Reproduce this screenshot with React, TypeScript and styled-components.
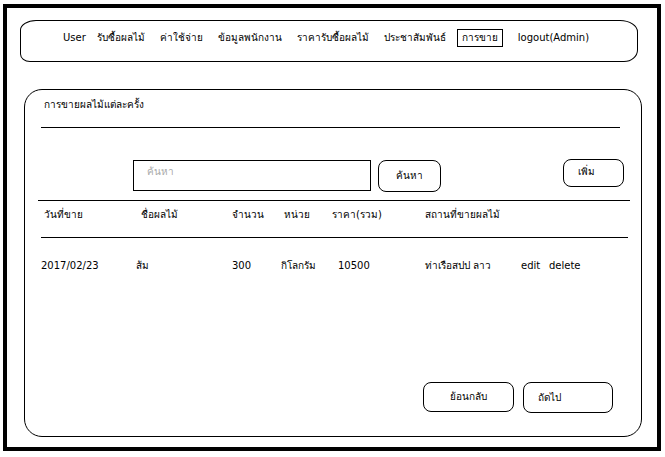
import React from "react";
import styled, { createGlobalStyle } from "styled-components";

const Global = createGlobalStyle`
  html, body { margin: 0; padding: 0; background: #fff; }
  body {
    font-family: "DejaVu Sans", "Liberation Sans", sans-serif;
    font-size: 10px;
    line-height: 14px;
    color: #000;
  }
`;

const Frame = styled.div`
  box-sizing: border-box;
  width: 658px;
  height: 447px;
  margin: 4px 0 0 3px;
  border: 4px solid #000;
  padding: 12px 0 0 13px;
  display: flex;
  flex-direction: column;
`;

const Nav = styled.nav`
  box-sizing: border-box;
  width: 618px;
  height: 42px;
  border: 1px solid #000;
  border-radius: 16px 18px 14px 10px / 10px 12px 12px 8px;
  display: flex;
  align-items: flex-start;
  gap: 15px;
  padding: 10px 0 0 42px;
`;

const NavItem = styled.span<{ $active?: boolean; $tight?: boolean }>`
  white-space: nowrap;
  ${(p) => (p.$tight ? `margin-right: -4px;` : ``)}
  ${(p) =>
    p.$active
      ? `border: 1px solid #000; padding: 1px 4px; margin: -2px 0 0 -4px;`
      : ``}
`;

const Panel = styled.section`
  box-sizing: border-box;
  width: 618px;
  height: 348px;
  margin: 27px 0 0 4px;
  border: 1px solid #000;
  border-radius: 18px;
  display: flex;
  flex-direction: column;
`;

const Title = styled.div`
  margin: 8px 0 0 19px;
`;

const Rule = styled.div<{ $top: number; $left: number; $width: number }>`
  height: 1px;
  background: #000;
  margin-top: ${(p) => p.$top}px;
  margin-left: ${(p) => p.$left}px;
  width: ${(p) => p.$width}px;
`;

const SearchRow = styled.div`
  display: flex;
  align-items: flex-start;
  margin: 32px 17px 0 108px;
`;

const SearchInput = styled.div`
  box-sizing: border-box;
  width: 238px;
  height: 31px;
  border: 1px solid #000;
  padding: 4px 0 0 13px;
  color: #a8a8a8;
`;

const Button = styled.button<{ $w: number; $h: number; $align?: string }>`
  box-sizing: border-box;
  width: ${(p) => p.$w}px;
  height: ${(p) => p.$h}px;
  border: 1px solid #000;
  border-radius: 8px;
  background: #fff;
  font: inherit;
  color: #000;
  padding: 0 14px;
  display: flex;
  align-items: center;
  justify-content: ${(p) => p.$align || "center"};
`;

const SearchButton = styled(Button)`
  margin-left: 7px;
`;

const AddButton = styled(Button)`
  margin-left: auto;
  margin-top: -1px;
  padding: 0 14px 2px 0;
`;

const TableRow = styled.div<{ $top: number; $left: number }>`
  display: flex;
  margin-top: ${(p) => p.$top}px;
  padding-left: ${(p) => p.$left}px;
`;

const Cell = styled.span<{ $w?: number }>`
  white-space: nowrap;
  ${(p) => (p.$w ? `width: ${p.$w}px; flex: none;` : ``)}
`;

const Footer = styled.div`
  margin: auto 28px 23px 0;
  display: flex;
  justify-content: flex-end;
  gap: 9px;
`;

const navItems = [
  "รับซื้อผลไม้",
  "ค่าใช้จ่าย",
  "ข้อมูลพนักงาน",
  "ราคารับซื้อผลไม้",
  "ประชาสัมพันธ์",
];

const headers: [string, number?][] = [
  ["วันที่ขาย", 97],
  ["ชื่อผลไม้", 91],
  ["จำนวน", 52],
  ["หน่วย", 48],
  ["ราคา(รวม)", 93],
  ["สถานที่ขายผลไม้"],
];

const data: [string, number?][] = [
  ["2017/02/23", 95],
  ["ส้ม", 96],
  ["300", 49],
  ["กิโลกรัม", 57],
  ["10500", 87],
  ["ท่าเรือสปป ลาว", 96],
  ["edit", 28],
  ["delete"],
];

export default function App() {
  return (
    <>
      <Global />
      <Frame>
        <Nav>
          <NavItem $tight>User</NavItem>
          {navItems.map((n) => (
            <NavItem key={n}>{n}</NavItem>
          ))}
          <NavItem $active>การขาย</NavItem>
          <NavItem>logout(Admin)</NavItem>
        </Nav>
        <Panel>
          <Title>การขายผลไม้แต่ละครั้ง</Title>
          <Rule $top={15} $left={16} $width={579} />
          <SearchRow>
            <SearchInput>ค้นหา</SearchInput>
            <SearchButton $w={63} $h={32}>ค้นหา</SearchButton>
            <AddButton $w={61} $h={28}>เพิ่ม</AddButton>
          </SearchRow>
          <Rule $top={8} $left={13} $width={592} />
          <TableRow $top={7} $left={19}>
            {headers.map(([t, w]) => (
              <Cell key={t} $w={w}>{t}</Cell>
            ))}
          </TableRow>
          <Rule $top={15} $left={16} $width={587} />
          <TableRow $top={21} $left={16}>
            {data.map(([t, w]) => (
              <Cell key={t} $w={w}>{t}</Cell>
            ))}
          </TableRow>
          <Footer>
            <Button $w={91} $h={30}>ย้อนกลับ</Button>
            <Button $w={90} $h={31} $align="flex-start">ถัดไป</Button>
          </Footer>
        </Panel>
      </Frame>
    </>
  );
}
